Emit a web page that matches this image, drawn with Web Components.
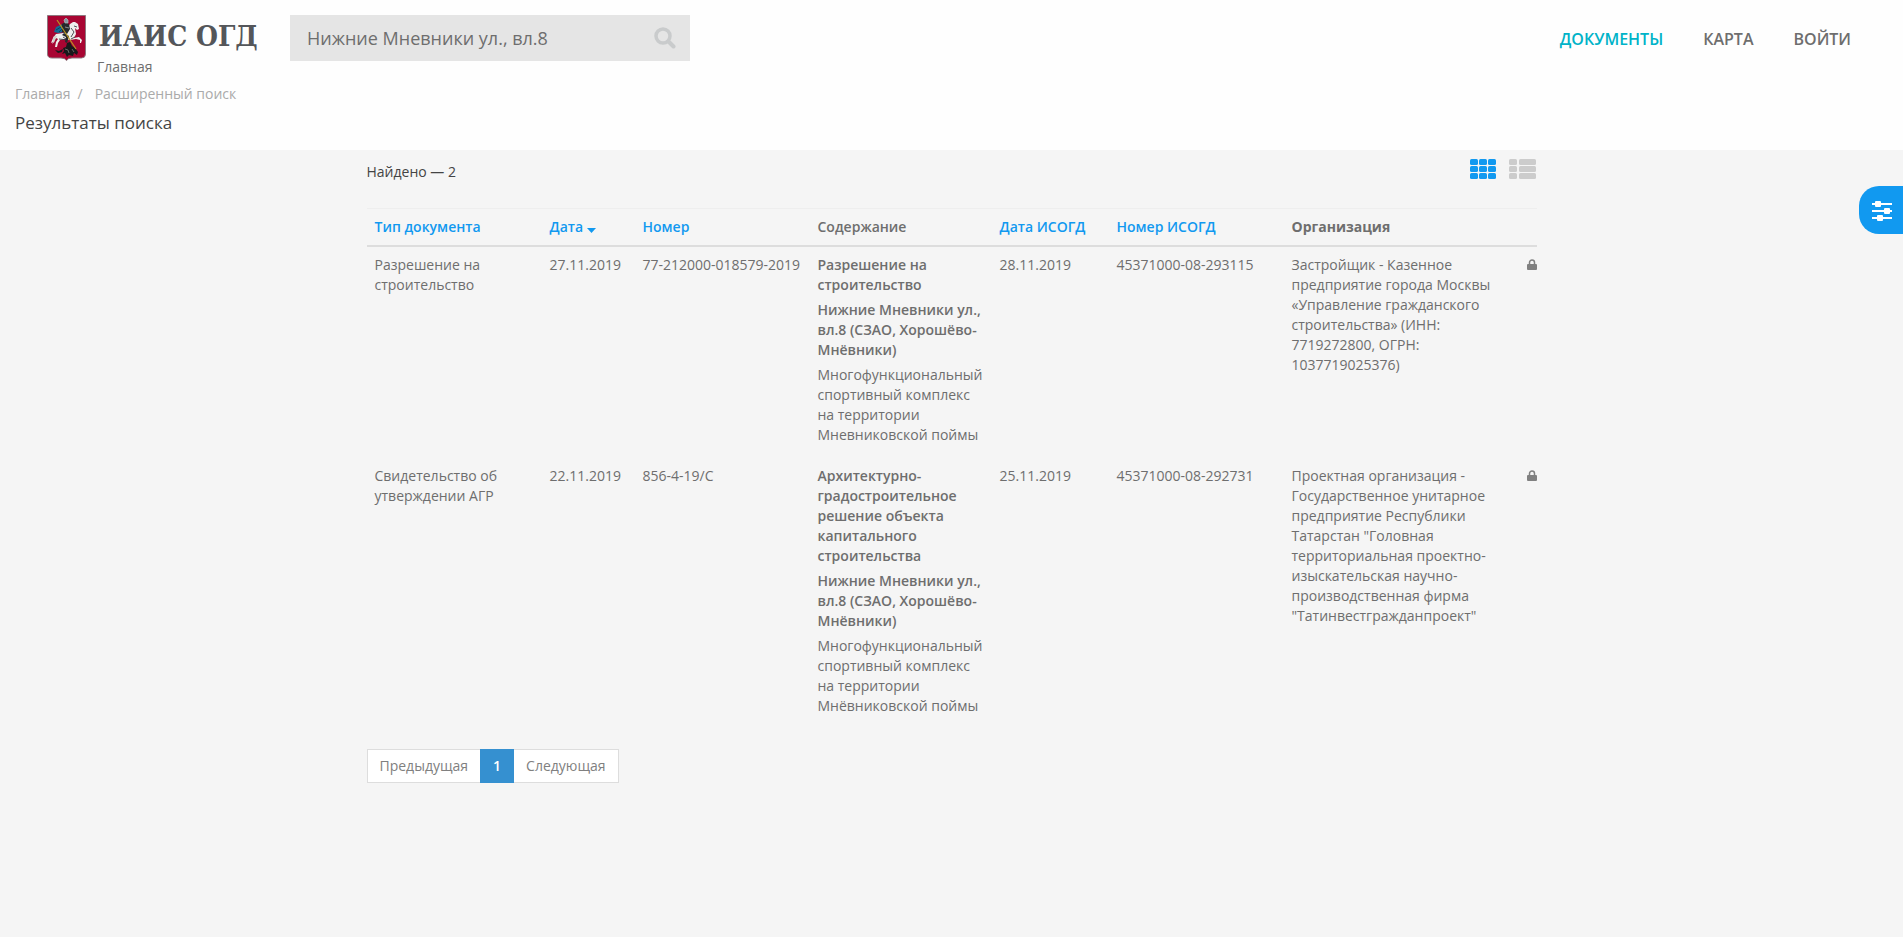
<!DOCTYPE html>
<html lang="ru">
<head>
<meta charset="utf-8">
<meta name="viewport" content="width=device-width, initial-scale=1">
<title>ИАИС ОГД</title>
<style>
	html {
		background: #f5f5f5;
	}

	body {
		margin: 0;
		font: 14px/20px "Open Sans", sans-serif;
		color: #6e6e6e;
		--accent: #1199f0;
		--active: #00b3c8;
		--line: #dddddd;
	}
</style>
</head>
<body>
<app-header>
	<brand-logo slot="brand" caption="Главная">ИАИС ОГД</brand-logo>
	<search-box slot="search" value="Нижние Мневники ул., вл.8"></search-box>
	<main-nav slot="nav">
		<a href="#documents" class="active">ДОКУМЕНТЫ</a>
		<a href="#map">КАРТА</a>
		<a href="#login">ВОЙТИ</a>
	</main-nav>
	<crumb-trail>
		<a href="#home">Главная</a>
		<a href="#search">Расширенный поиск</a>
	</crumb-trail>
	<span slot="title">Результаты поиска</span>
</app-header>
<results-panel>
	<span slot="count">Найдено — 2</span>
	<view-switch slot="view"></view-switch>
	<results-table></results-table>
	<page-list slot="pages"></page-list>
</results-panel>
<filter-tab></filter-tab>

<script>
const define = (name, html) => {
	customElements.define(name, class extends HTMLElement {
		connectedCallback() {
			if (this.shadowRoot) return;
			this.attachShadow({ mode: "open" }).innerHTML =
				typeof html === "function" ? html(this) : html;
		}
	});
};

define("app-header", `
	<style>
		:host {
			display: block;
			background: #fefefe;
			padding-bottom: 15px;
		}

		.bar {
			display: grid;
			grid-template-columns: 243px 400px 1fr;
			padding: 15px 52px 0 47px;
			align-items: start;
		}

		.crumbs {
			padding: 7px 15px;
		}

		h1 {
			margin: 0;
			padding: 0 15px;
			font-size: 17px;
			line-height: 24px;
			font-weight: 400;
			color: #444444;
		}
	</style>
	<header>
		<div class="bar">
			<slot name="brand"></slot>
			<slot name="search"></slot>
			<slot name="nav"></slot>
		</div>
		<div class="crumbs"><slot></slot></div>
		<h1><slot name="title"></slot></h1>
	</header>
`);

define("brand-logo", (el) => `
	<style>
		:host {
			display: block;
		}

		a {
			display: flex;
			gap: 13px;
			height: 42px;
			color: #54565a;
			font: 700 28px/44px "DejaVu Serif Condensed", "DejaVu Serif", serif;
			font-stretch: condensed;
			text-decoration: none;
			white-space: nowrap;
		}

		svg {
			flex: none;
		}

		small {
			display: block;
			padding-left: 50px;
			font-size: 14px;
		}
	</style>
	<a href="#home">
		<svg width="39" height="46" viewBox="0 0 39 46" aria-hidden="true">
			<path d="M.5.5h38V39q0 4-4 4H25q-4 0-5.500 2.500Q18 43 14 43H5q-4.500 0-4.500-4z" fill="#a80532" stroke="#8d777e"/>
			<!-- dragon -->
			<path d="M15 39l2-3-1-3 3-1 1-4 3-1 2 4 3 2 3 4-1 3-3-2-1 3-4-1-2 2-2-4zM8 35l4 1 4-2-1 3-4 1z" fill="#17191b"/>
			<path d="M18 34l3 1 1 3M25 34l2 3" fill="none" stroke="#8b8b84" stroke-width=".7"/>
			<!-- horse -->
			<path d="M28 7l3 2 1 5-2 1-2-2 1 6-2 4 5-1 3 3-1 3-1 0 0-3-4-1-6 1-5-1-5 1-2 3-1 4-2 0 1-5 2-3-2-1-3 4-2 1 2-5 3-4 7-1 3-2 4-7 3-2z" fill="#efefed"/>
			<path d="M10 21q-4-1-4 3 0 3-1 5 3-2 4-6z" fill="#d2d3d0"/>
			<path d="M24 13l3 4-3 5M12 24l9 1M30 12l-3-1M28 22l-4 2M16 22l3 2" fill="none" stroke="#3c4044" stroke-width=".9"/>
			<!-- rider -->
			<path d="M9 12l7-3 2 3-1 5-6 1-4-1z" fill="#146b93"/>
			<path d="M9 15l5-3M12 17l4-4" stroke="#083950" stroke-width=".8"/>
			<path d="M15 9l3-2 4 2 1 5-3 5-5-2zM17 18l5 3-2 7-2-1 1-5-4-2z" fill="#25292c"/>
			<path d="M17 5l2-2 2 2 0 3-3 0zM18 12l4 1" fill="#8798a0" stroke="#b3bcc0" stroke-width=".7"/>
			<path d="M10 5l19 29" stroke="#b99720" stroke-width="1.200"/>
		</svg>
		<span><slot></slot></span>
	</a>
	<small>${el.getAttribute("caption")}</small>
`);

define("search-box", (el) => `
	<style>
		:host {
			display: block;
		}

		form {
			display: flex;
			align-items: center;
			height: 46px;
			background: #e5e5e5;
		}

		input {
			flex: 1;
			min-width: 0;
			height: 46px;
			box-sizing: border-box;
			padding: 0 0 0 17px;
			border: 0;
			background: none;
			font: 18px/24px "Open Sans", sans-serif;
			color: #6e6e6e;
		}

		button {
			display: flex;
			padding: 0 14px;
			border: 0;
			background: none;
		}
	</style>
	<form role="search">
		<input type="text" aria-label="Поиск" value="${el.getAttribute("value")}">
		<button type="button" aria-label="Найти">
			<svg width="22" height="22" viewBox="0 0 22 22" fill="none" stroke="#c9cbcc">
				<circle cx="9" cy="9" r="7" stroke-width="3.500"/>
				<path d="M14.500 14.500l5 5" stroke-width="4" stroke-linecap="round"/>
			</svg>
		</button>
	</form>
`);

define("main-nav", `
	<style>
		:host {
			display: block;
		}

		nav {
			display: flex;
			justify-content: flex-end;
			gap: 40px;
			padding-top: 12px;
		}

		::slotted(a) {
			font-size: 16px;
			line-height: 24px;
			font-weight: 600;
			color: #6e6e6e;
			text-decoration: none;
		}

		::slotted(a.active) {
			color: var(--active);
		}
	</style>
	<nav><slot></slot></nav>
`);

define("crumb-trail", `
	<style>
		:host {
			display: block;
			color: #aaaaaa;
		}

		nav {
			display: flex;
		}

		::slotted(a) {
			color: inherit;
			text-decoration: none;
		}

		::slotted(a:not(:first-child))::before {
			content: "/";
			padding: 0 12px 0 7px;
		}
	</style>
	<nav aria-label="Навигация"><slot></slot></nav>
`);

define("results-panel", `
	<style>
		:host {
			display: block;
			max-width: 1170px;
			margin: 0 auto;
			padding: 8px 15px 24px;
		}

		.top {
			display: flex;
			justify-content: space-between;
			height: 50px;
			color: #444444;
		}

		.count {
			padding-top: 4px;
		}

		.pages {
			margin-top: 20px;
		}
	</style>
	<main>
		<div class="top">
			<div class="count"><slot name="count"></slot></div>
			<slot name="view"></slot>
		</div>
		<slot></slot>
		<div class="pages"><slot name="pages"></slot></div>
	</main>
`);

// rows of rounded blocks, each given as [x, width]
const blocks = (columns) => [0, 7, 14].map((y) => columns.map(([x, width]) =>
	`<rect x="${x}" y="${y}" width="${width}" height="6" rx="1.500"/>`).join("")).join("");

define("view-switch", `
	<style>
		:host {
			display: flex;
			gap: 12px;
		}

		button {
			display: flex;
			height: 22px;
			padding: 1px 0 0;
			border: 0;
			background: none;
			color: #cccccc;
		}

		button[aria-pressed="true"] {
			color: var(--accent);
		}
	</style>
	<button type="button" aria-label="Таблица" aria-pressed="true">
		<svg width="28" height="21" fill="currentColor">${blocks([[1, 8], [10, 8], [19, 8]])}</svg>
	</button>
	<button type="button" aria-label="Список" aria-pressed="false">
		<svg width="28" height="21" fill="currentColor">${blocks([[0, 8], [10, 17]])}</svg>
	</button>
`);

const rows = [
	{
		type: "Разрешение на строительство",
		date: "27.11.2019",
		number: "77-212000-018579-2019",
		title: "Разрешение на строительство",
		address: "Нижние Мневники ул., вл.8 (СЗАО, Хорошёво-Мнёвники)",
		text: "Многофункциональный спортивный комплекс на территории Мневниковской поймы",
		regDate: "28.11.2019",
		regNumber: "45371000-08-293115",
		org: "Застройщик - Казенное предприятие города Москвы «Управление гражданского строительства» (ИНН: 7719272800, ОГРН: 1037719025376)"
	},
	{
		type: "Свидетельство об утверждении АГР",
		date: "22.11.2019",
		number: "856-4-19/С",
		title: "Архитектурно-градостроительное решение объекта капитального строительства",
		address: "Нижние Мневники ул., вл.8 (СЗАО, Хорошёво-Мнёвники)",
		text: "Многофункциональный спортивный комплекс на территории Мнёвниковской поймы",
		regDate: "25.11.2019",
		regNumber: "45371000-08-292731",
		org: "Проектная организация - Государственное унитарное предприятие Республики Татарстан \"Головная территориальная проектно-изыскательская научно-производственная фирма \"Татинвестгражданпроект\""
	}
];

const lock = `
	<svg width="10" height="11" viewBox="0 0 10 11" role="img" aria-label="Доступ ограничен">
		<path d="M2.500 6V3.500a2.500 2.500 0 0 1 5 0V6" fill="none" stroke="#808080" stroke-width="1.500"/>
		<rect y="5" width="10" height="6" rx="1" fill="#808080"/>
	</svg>`;

define("results-table", `
	<style>
		:host {
			display: block;
		}

		table {
			width: 100%;
			table-layout: fixed;
			border-collapse: collapse;
			border-top: 1px solid #eeeeee;
		}

		col.type, col.number, col.reg-number { width: 175px; }
		col.date { width: 93px; }
		col.content { width: 182px; }
		col.reg-date { width: 117px; }
		col.lock { width: 36px; }

		th, td {
			padding: 8px;
			text-align: left;
			vertical-align: top;
			overflow-wrap: break-word;
		}

		th {
			border-bottom: 2px solid var(--line);
			font-weight: 600;
		}

		th.org {
			font-weight: 700;
		}

		th a {
			color: var(--accent);
			text-decoration: none;
		}

		th svg {
			vertical-align: -1px;
		}

		td:last-child {
			padding-right: 0;
			text-align: right;
		}

		p {
			margin: 0 0 5px;
		}

		strong {
			font-weight: 600;
		}
	</style>
	<table>
		<colgroup>
			<col class="type"><col class="date"><col class="number"><col class="content">
			<col class="reg-date"><col class="reg-number"><col><col class="lock">
		</colgroup>
		<thead>
			<tr>
				<th><a href="#type">Тип документа</a></th>
				<th><a href="#date">Дата <svg width="9" height="5" aria-hidden="true"><path d="M0 0h9L4.500 5z" fill="currentColor"/></svg></a></th>
				<th><a href="#number">Номер</a></th>
				<th>Содержание</th>
				<th><a href="#reg-date">Дата ИСОГД</a></th>
				<th><a href="#reg-number">Номер ИСОГД</a></th>
				<th class="org">Организация</th>
				<th></th>
			</tr>
		</thead>
		<tbody>
			${rows.map((row) => `
				<tr>
					<td>${row.type}</td>
					<td>${row.date}</td>
					<td>${row.number}</td>
					<td>
						<p><strong>${row.title}</strong></p>
						<p><strong>${row.address}</strong></p>
						<p>${row.text}</p>
					</td>
					<td>${row.regDate}</td>
					<td>${row.regNumber}</td>
					<td>${row.org}</td>
					<td>${lock}</td>
				</tr>
			`).join("")}
		</tbody>
	</table>
`);

define("page-list", `
	<style>
		:host {
			display: block;
		}

		nav {
			display: flex;
		}

		a {
			padding: 6px 12px;
			border: 1px solid var(--line);
			background: #ffffff;
			color: #808080;
			text-decoration: none;
		}

		a:first-child {
			border-right: 0;
		}

		a:last-child {
			border-left: 0;
		}

		a[aria-current] {
			border-color: #3590d0;
			background: #3590d0;
			color: #ffffff;
			font-weight: 600;
		}
	</style>
	<nav aria-label="Страницы">
		<a href="#prev">Предыдущая</a>
		<a href="#1" aria-current="page">1</a>
		<a href="#next">Следующая</a>
	</nav>
`);

define("filter-tab", `
	<style>
		:host {
			position: fixed;
			top: 186px;
			right: 0;
		}

		button {
			display: flex;
			align-items: center;
			width: 44px;
			height: 48px;
			padding: 2px 0 0 12px;
			border: 0;
			border-radius: 20px 0 0 20px;
			background: var(--accent);
		}
	</style>
	<button type="button" aria-label="Фильтры">
		<svg width="22" height="20" fill="#ffffff">
			<path d="M1 2h20v2H1zM1 9h20v2H1zM1 16h20v2H1z"/>
			<rect x="4" y="0" width="6" height="6" rx="1"/>
			<rect x="13" y="7" width="6" height="6" rx="1"/>
			<rect x="6" y="14" width="6" height="6" rx="1"/>
		</svg>
	</button>
`);
</script>
</body>
</html>
